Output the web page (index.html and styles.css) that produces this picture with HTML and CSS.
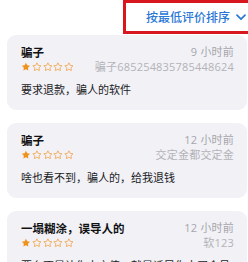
FILE: index.html
```html
<!DOCTYPE html>
<html lang="zh-CN">
<head>
<meta charset="utf-8">
<link rel="stylesheet" href="styles.css">
</head>
<body>
<div class="header">
  <div class="sort">
    <span class="sort-label">按最低评价排序</span>
    <svg class="chev" width="10" height="7" viewBox="0 0 10 7"><path d="M1 1.2 L5 5.2 L9 1.2" fill="none" stroke="#2a78d4" stroke-width="1.7" stroke-linecap="round" stroke-linejoin="round"/></svg>
  </div>
</div>

<div class="card">
  <div class="row">
    <span class="title">骗子</span>
    <span class="meta">9 小时前</span>
  </div>
  <div class="row row2">
    <span class="stars">
      <svg viewBox="0 0 24 24"><polygon class="on" points="12,2 15.09,8.26 22,9.27 17,14.14 18.18,21.02 12,17.77 5.82,21.02 7,14.14 2,9.27 8.91,8.26"/></svg>
      <svg viewBox="0 0 24 24"><polygon class="off" points="12,2 15.09,8.26 22,9.27 17,14.14 18.18,21.02 12,17.77 5.82,21.02 7,14.14 2,9.27 8.91,8.26"/></svg>
      <svg viewBox="0 0 24 24"><polygon class="off" points="12,2 15.09,8.26 22,9.27 17,14.14 18.18,21.02 12,17.77 5.82,21.02 7,14.14 2,9.27 8.91,8.26"/></svg>
      <svg viewBox="0 0 24 24"><polygon class="off" points="12,2 15.09,8.26 22,9.27 17,14.14 18.18,21.02 12,17.77 5.82,21.02 7,14.14 2,9.27 8.91,8.26"/></svg>
      <svg viewBox="0 0 24 24"><polygon class="off" points="12,2 15.09,8.26 22,9.27 17,14.14 18.18,21.02 12,17.77 5.82,21.02 7,14.14 2,9.27 8.91,8.26"/></svg>
    </span>
    <span class="meta light">骗子685254835785448624</span>
  </div>
  <div class="text">要求退款，骗人的软件</div>
</div>

<div class="card">
  <div class="row">
    <span class="title">骗子</span>
    <span class="meta">12 小时前</span>
  </div>
  <div class="row row2">
    <span class="stars">
      <svg viewBox="0 0 24 24"><polygon class="on" points="12,2 15.09,8.26 22,9.27 17,14.14 18.18,21.02 12,17.77 5.82,21.02 7,14.14 2,9.27 8.91,8.26"/></svg>
      <svg viewBox="0 0 24 24"><polygon class="off" points="12,2 15.09,8.26 22,9.27 17,14.14 18.18,21.02 12,17.77 5.82,21.02 7,14.14 2,9.27 8.91,8.26"/></svg>
      <svg viewBox="0 0 24 24"><polygon class="off" points="12,2 15.09,8.26 22,9.27 17,14.14 18.18,21.02 12,17.77 5.82,21.02 7,14.14 2,9.27 8.91,8.26"/></svg>
      <svg viewBox="0 0 24 24"><polygon class="off" points="12,2 15.09,8.26 22,9.27 17,14.14 18.18,21.02 12,17.77 5.82,21.02 7,14.14 2,9.27 8.91,8.26"/></svg>
      <svg viewBox="0 0 24 24"><polygon class="off" points="12,2 15.09,8.26 22,9.27 17,14.14 18.18,21.02 12,17.77 5.82,21.02 7,14.14 2,9.27 8.91,8.26"/></svg>
    </span>
    <span class="meta light">交定金都交定金</span>
  </div>
  <div class="text">啥也看不到，骗人的，给我退钱</div>
</div>

<div class="card">
  <div class="row">
    <span class="title">一塌糊涂，误导人的</span>
    <span class="meta">12 小时前</span>
  </div>
  <div class="row row2">
    <span class="stars">
      <svg viewBox="0 0 24 24"><polygon class="on" points="12,2 15.09,8.26 22,9.27 17,14.14 18.18,21.02 12,17.77 5.82,21.02 7,14.14 2,9.27 8.91,8.26"/></svg>
      <svg viewBox="0 0 24 24"><polygon class="off" points="12,2 15.09,8.26 22,9.27 17,14.14 18.18,21.02 12,17.77 5.82,21.02 7,14.14 2,9.27 8.91,8.26"/></svg>
      <svg viewBox="0 0 24 24"><polygon class="off" points="12,2 15.09,8.26 22,9.27 17,14.14 18.18,21.02 12,17.77 5.82,21.02 7,14.14 2,9.27 8.91,8.26"/></svg>
      <svg viewBox="0 0 24 24"><polygon class="off" points="12,2 15.09,8.26 22,9.27 17,14.14 18.18,21.02 12,17.77 5.82,21.02 7,14.14 2,9.27 8.91,8.26"/></svg>
      <svg viewBox="0 0 24 24"><polygon class="off" points="12,2 15.09,8.26 22,9.27 17,14.14 18.18,21.02 12,17.77 5.82,21.02 7,14.14 2,9.27 8.91,8.26"/></svg>
    </span>
    <span class="meta light">软123</span>
  </div>
  <div class="text">要么不是让你去充值，就是诱导你去买会员，一</div>
</div>
</body>
</html>
```

FILE: styles.css
```css
html, body {
  margin: 0;
  padding: 0;
  width: 248px;
  height: 262px;
  overflow: hidden;
  background: #ffffff;
  font-family: "Noto Sans CJK SC", "Noto Sans", sans-serif;
  color: #1c1c1e;
}

.header {
  height: 35px;
  display: flex;
  padding-left: 123px;
}

.sort {
  flex: 0 0 140px;
  height: 34px;
  box-sizing: border-box;
  border: 3px solid #d8161d;
  display: flex;
  align-items: center;
  padding-left: 20px;
  gap: 6px;
  color: #2a78d4;
}

.sort-label {
  font-size: 12px;
  line-height: 14px;
  font-weight: 500;
}

.chev {
  display: block;
  margin-top: 1px;
}

.card {
  margin: 0 1px 13px 7px;
  height: 75px;
  box-sizing: border-box;
  background: #f1f1f6;
  border-radius: 9px;
  padding: 10px 13px 0 14px;
}

.row {
  display: flex;
  justify-content: space-between;
  align-items: center;
  height: 14px;
}

.row2 {
  margin-top: 1px;
}

.title {
  font-size: 11.5px;
  font-weight: 700;
  line-height: 14px;
  color: #111113;
}

.meta {
  font-family: "Open Sans", "Noto Sans CJK SC", sans-serif;
  font-size: 11px;
  line-height: 14px;
  letter-spacing: 0.2px;
  color: #a6a6ab;
}

.meta.light {
  color: #b3b3b8;
}

.stars {
  display: flex;
  gap: 1px;
}

.stars svg {
  width: 9.8px;
  height: 9.8px;
  display: block;
}

.stars .on {
  fill: #f0911c;
}

.stars .off {
  fill: none;
  stroke: #f2a54a;
  stroke-width: 2;
  stroke-linejoin: round;
}

.text {
  margin-top: 7px;
  font-size: 11px;
  line-height: 16px;
  color: #1c1c1e;
  white-space: nowrap;
  overflow: hidden;
}
```
